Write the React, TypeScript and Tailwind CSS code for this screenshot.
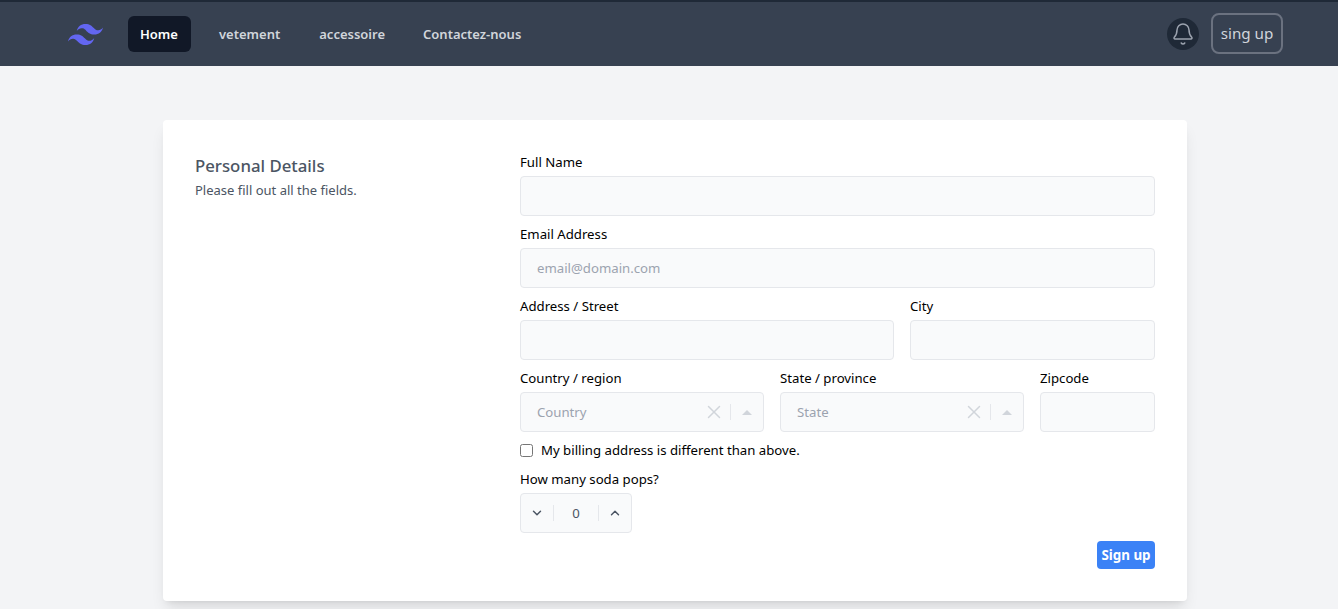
import { Bell, ChevronDown, ChevronUp, X } from "lucide-react";

const labelClass = "block h-5 text-[13.2px] leading-5 text-black";
const inputClass =
	"mt-1 block h-10 w-full rounded border border-[#e5e7eb] bg-[#f9fafb] px-4 text-[13.2px] text-[#374151] placeholder:text-[#9ca3af]";

function Field({ label, span, placeholder }: { label: string; span: string; placeholder?: string }) {
	return (
		<div className={span}>
			<label className={labelClass}>{label}</label>
			<input className={inputClass} placeholder={placeholder} />
		</div>
	);
}

function SelectField({ label, placeholder }: { label: string; placeholder: string }) {
	return (
		<div className="col-span-2">
			<label className={labelClass}>{label}</label>
			<div className="mt-1 flex h-10 items-center rounded border border-[#e5e7eb] bg-[#f9fafb]">
				<span className="flex-1 px-4 pt-px text-[13.2px] text-[#9ca3af]">{placeholder}</span>
				<X className="h-[22px] w-[22px] text-[#d1d5db]" strokeWidth={1.6} />
				<span className="ml-[5px] h-4 border-l border-[#e5e7eb]"></span>
				<span className="mx-[11px] h-0 w-0 border-x-[5px] border-b-[5px] border-x-transparent border-b-[#d1d5db]"></span>
			</div>
		</div>
	);
}

export default function App() {
	return (
		<div className="min-h-[609px] bg-[#f3f4f6] font-['Noto_Sans',sans-serif]">
			<nav className="flex h-[66px] items-center justify-between border-t-2 border-[#1f2937] bg-[#374151] pl-[68px] pr-[55px]">
				<div className="flex items-center">
					<svg viewBox="0 0 48 48" className="h-[35px] w-[35px] text-[#6366f1]" fill="currentColor">
						<path d="M24 9.5c-6.4 0-10.4 3.2-12 9.6 2.4-3.2 5.2-4.4 8.4-3.6 1.83.46 3.13 1.78 4.58 3.26C27.33 21.17 30.05 24 36 24c6.4 0 10.4-3.2 12-9.6-2.4 3.2-5.2 4.4-8.4 3.6-1.83-.46-3.13-1.78-4.58-3.26C32.67 12.33 29.95 9.5 24 9.5zM12 24C5.6 24 1.6 27.2 0 33.6c2.4-3.2 5.2-4.4 8.4-3.6 1.83.46 3.13 1.78 4.58 3.26C15.33 35.67 18.05 38.5 24 38.5c6.4 0 10.4-3.2 12-9.6-2.4 3.2-5.2 4.4-8.4 3.6-1.83-.46-3.13-1.78-4.58-3.26C20.67 26.83 17.95 24 12 24z" />
					</svg>
					<div className="ml-[25px] flex items-center gap-[15px] text-[13px] font-semibold text-[#d1d5db]">
						<a className="mr-px w-[63px] rounded-md bg-[#111827] py-2 pl-3 leading-5 text-white">Home</a>
						<a className="px-3 py-2 leading-5">vetement</a>
						<a className="px-3 py-2 leading-5">accessoire</a>
						<a className="-ml-px px-3 py-2 leading-5">Contactez-nous</a>
					</div>
				</div>
				<div className="flex items-center gap-3">
					<span className="flex h-8 w-8 items-center justify-center rounded-full bg-[#1f2937] text-[#9ca3af]">
						<Bell className="h-6 w-6" strokeWidth={1.5} />
					</span>
					<button className="mb-[2px] h-[41px] w-[72px] rounded-lg border-2 border-[#6b7280] text-[15.2px] text-[#d1d5db]">
						sing up
					</button>
				</div>
			</nav>
			<main className="pl-[163px] pr-[151px] pt-[54px]">
				<div className="grid grid-cols-[309px_1fr] gap-4 rounded bg-white p-8 shadow-lg">
					<div className="pt-[2px]">
						<p className="text-[16.8px] leading-6 font-medium text-[#4b5563]">Personal Details</p>
						<p className="mt-[2px] text-[13px] leading-5 text-[#4b5563]">Please fill out all the fields.</p>
					</div>
					<div>
						<div className="grid grid-cols-[repeat(4,114px)_1fr] gap-x-4 gap-y-2">
							<Field label="Full Name" span="col-span-5" />
							<Field label="Email Address" span="col-span-5" placeholder="email@domain.com" />
							<Field label="Address / Street" span="col-span-3" />
							<Field label="City" span="col-span-2" />
							<SelectField label="Country / region" placeholder="Country" />
							<SelectField label="State / province" placeholder="State" />
							<Field label="Zipcode" span="col-span-1" />
							<div className="col-span-5 mb-px flex h-5 items-center">
								<input type="checkbox" className="h-[13px] w-[13px]" />
								<label className="ml-2 text-[13.2px] leading-5 text-black">My billing address is different than above.</label>
							</div>
							<div className="col-span-5">
								<label className={labelClass}>How many soda pops?</label>
								<div className="mt-1 flex h-10 w-28 items-center rounded border border-[#e5e7eb] bg-[#f9fafb] text-[#4b5563]">
									<span className="flex w-[32px] justify-center">
										<ChevronDown className="h-[14px] w-[14px]" strokeWidth={2.5} />
									</span>
									<span className="h-4 border-l border-[#e5e7eb]"></span>
									<span className="w-[44px] pt-px text-center text-[13.2px]">0</span>
									<span className="h-4 border-l border-[#e5e7eb]"></span>
									<span className="flex w-[32px] justify-center">
										<ChevronUp className="h-[14px] w-[14px]" strokeWidth={2.5} />
									</span>
								</div>
							</div>
						</div>
						<div className="mt-2 flex justify-end">
							<button className="h-7 w-[58px] rounded bg-[#3b82f6] text-[13.4px] font-bold text-white">Sign up</button>
						</div>
					</div>
				</div>
			</main>
		</div>
	);
}
